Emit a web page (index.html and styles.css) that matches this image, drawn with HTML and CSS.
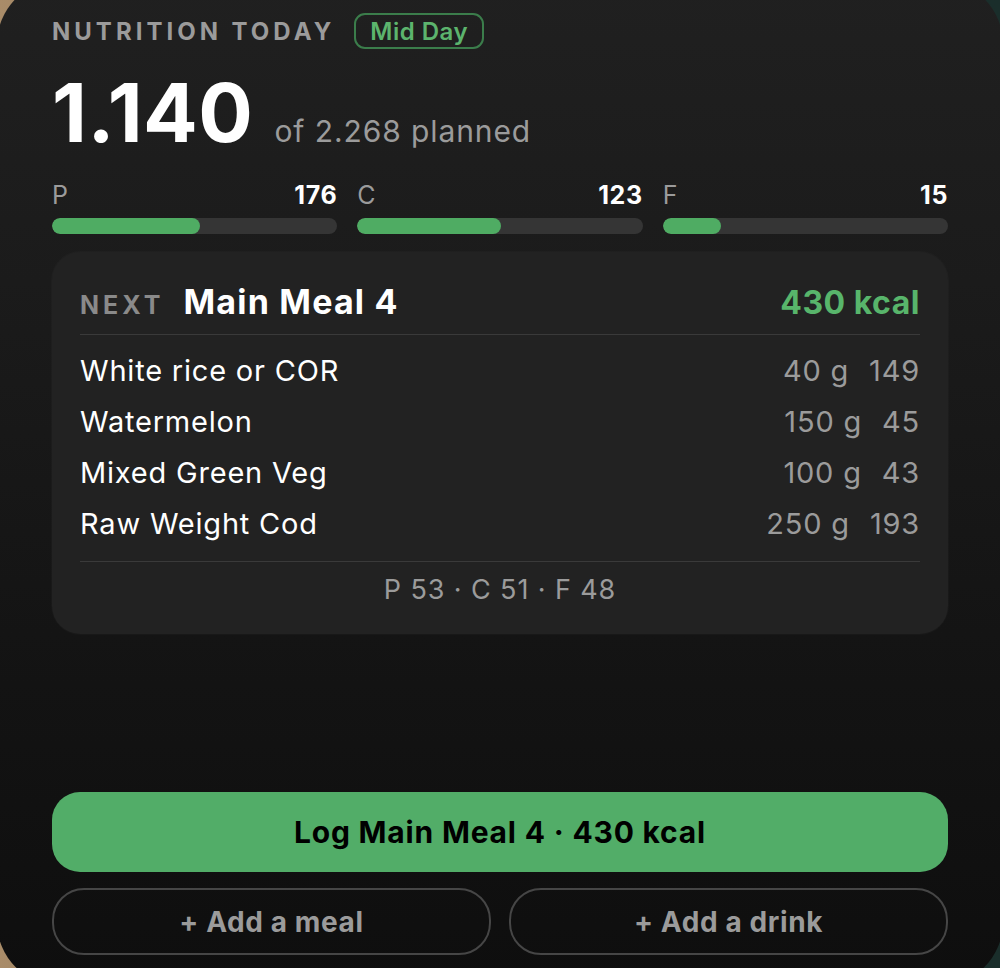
FILE: index.html
```html
<!DOCTYPE html>
<html lang="en">
<head>
    <meta charset="UTF-8">
    <meta name="viewport" content="width=device-width, initial-scale=1.0">
    <title>Nutrition Today</title>
    <link rel="stylesheet" href="styles.css">
</head>
<body>

<div class="widget">
    <div class="top-row">
        <span class="eyebrow">NUTRITION TODAY</span>
        <span class="pill">Mid Day</span>
    </div>

    <div class="total">
        <span class="total-value">1.140</span>
        <span class="total-of">of 2.268 planned</span>
    </div>

    <div class="macros">
        <div class="macro">
            <div class="macro-head"><span>P</span><b>176</b></div>
            <div class="track"><div class="fill" style="width: 52%;"></div></div>
        </div>
        <div class="macro">
            <div class="macro-head"><span>C</span><b>123</b></div>
            <div class="track"><div class="fill" style="width: 50.5%;"></div></div>
        </div>
        <div class="macro">
            <div class="macro-head"><span>F</span><b>15</b></div>
            <div class="track"><div class="fill" style="width: 20.5%;"></div></div>
        </div>
    </div>

    <div class="meal-card">
        <div class="meal-head">
            <span class="next">NEXT</span>
            <span class="meal-name">Main Meal 4</span>
            <span class="meal-kcal">430 kcal</span>
        </div>
        <ul class="items">
            <li><span class="item-name">White rice or COR</span><span class="item-qty">40 g</span><span class="item-kcal">149</span></li>
            <li><span class="item-name">Watermelon</span><span class="item-qty">150 g</span><span class="item-kcal">45</span></li>
            <li><span class="item-name">Mixed Green Veg</span><span class="item-qty">100 g</span><span class="item-kcal">43</span></li>
            <li><span class="item-name">Raw Weight Cod</span><span class="item-qty">250 g</span><span class="item-kcal">193</span></li>
        </ul>
        <div class="meal-macros">P 53 · C 51 · F 48</div>
    </div>

    <div class="spacer"></div>

    <button class="btn-log">Log Main Meal 4 · 430 kcal</button>
    <div class="btn-row">
        <button class="btn-outline">+ Add a meal</button>
        <button class="btn-outline">+ Add a drink</button>
    </div>
</div>

</body>
</html>
```

FILE: styles.css
```css
html, body {
    margin: 0;
    padding: 0;
    height: 968px;
    overflow: hidden;
}
body {
    font-family: Inter, "Noto Sans", sans-serif;
    background: linear-gradient(90deg, #a98c69 0%, #6d5c47 40%, #1c2a28 70%, #1a2e2b 100%);
    color: #fff;
}
.widget {
    box-sizing: border-box;
    margin: -20px -3px 0 -3px;
    height: 1006px;
    border-radius: 64px;
    background: linear-gradient(180deg, #202020 0%, #1b1b1b 30%, #131313 70%, #0e0e0e 100%);
    padding: 33px 55px 31px 55px;
    display: flex;
    flex-direction: column;
}
.top-row {
    display: flex;
    align-items: center;
    gap: 19px;
    height: 36px;
}
.eyebrow {
    font-size: 24px;
    font-weight: 700;
    letter-spacing: 4px;
    color: #9b9b9b;
}
.pill {
    box-sizing: border-box;
    height: 36px;
    padding: 0 14px;
    border: 2px solid #3b7d4b;
    border-radius: 11px;
    color: #5cb46d;
    font-size: 24px;
    font-weight: 600;
    letter-spacing: 0.5px;
    display: flex;
    align-items: center;
}
.total {
    display: flex;
    align-items: baseline;
    gap: 21px;
    margin-top: 22px;
    height: 84px;
}
.total-value {
    font-size: 81px;
    font-weight: 700;
    letter-spacing: 0.5px;
    line-height: 84px;
}
.total-of {
    font-size: 30px;
    letter-spacing: 0.9px;
    color: #9b9b9b;
}
.macros {
    display: grid;
    grid-template-columns: 1fr 1fr 1fr;
    gap: 20px;
    margin-top: 25px;
}
.macro-head {
    display: flex;
    justify-content: space-between;
    font-size: 25px;
    line-height: 30px;
    letter-spacing: 0.6px;
    color: #9b9b9b;
}
.macro-head b {
    color: #fff;
    font-weight: 700;
}
.track {
    margin-top: 8px;
    height: 16px;
    border-radius: 8px;
    background: #353535;
    overflow: hidden;
}
.fill {
    height: 100%;
    border-radius: 8px;
    background: #4fac63;
}
.meal-card {
    margin-top: 18px;
    background: #222222;
    border-radius: 28px;
    padding: 29px 28px 28px;
    box-shadow: 0 0 0 1px rgba(255, 255, 255, 0.02);
}
.meal-head {
    display: flex;
    align-items: baseline;
    padding-bottom: 12px;
    border-bottom: 1px solid #3a3a3a;
}
.next {
    font-size: 25px;
    font-weight: 700;
    letter-spacing: 4px;
    color: #8a8a8a;
    margin-right: 19px;
}
.meal-name {
    font-size: 34px;
    font-weight: 700;
    letter-spacing: 1.2px;
}
.meal-kcal {
    margin-left: auto;
    font-size: 32px;
    font-weight: 700;
    letter-spacing: 0.5px;
    color: #58b56b;
}
.items {
    list-style-type: none;
    margin: 0;
    padding: 10px 0 12px;
    border-bottom: 1px solid #3a3a3a;
}
.items li {
    display: flex;
    align-items: baseline;
    gap: 20px;
    font-size: 29px;
    line-height: 51px;
    letter-spacing: 0.8px;
}
.item-name {
    flex: 1;
}
.item-qty,
.item-kcal {
    color: #9b9b9b;
}
.meal-macros {
    text-align: center;
    color: #9b9b9b;
    font-size: 27px;
    letter-spacing: 0.9px;
    margin-top: 11px;
}
.spacer {
    flex: 1;
}
.btn-log {
    height: 80px;
    border: none;
    border-radius: 28px;
    background: #52ad68;
    color: #000;
    font-family: inherit;
    font-size: 30px;
    font-weight: 700;
    letter-spacing: 0.8px;
}
.btn-row {
    display: grid;
    grid-template-columns: 1fr 1fr;
    gap: 18px;
    margin-top: 16px;
}
.btn-outline {
    height: 67px;
    border: 2px solid #464646;
    border-radius: 32px;
    background: transparent;
    color: #9b9b9b;
    font-family: inherit;
    font-size: 28px;
    font-weight: 700;
    letter-spacing: 0.6px;
}
```
